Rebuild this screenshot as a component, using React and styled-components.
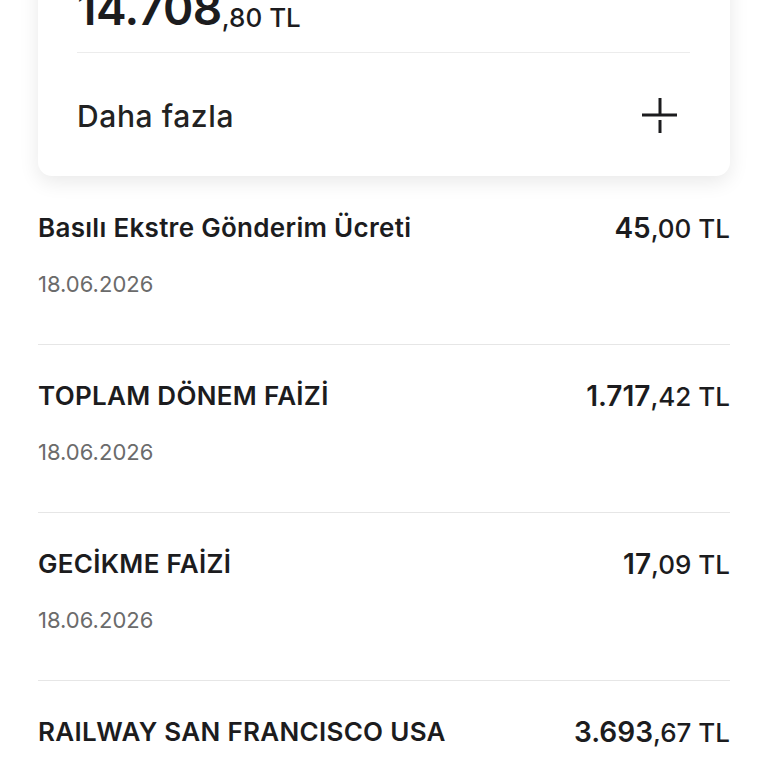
import styled, { createGlobalStyle } from 'styled-components';

const GlobalStyle = createGlobalStyle`
  html, body {
    margin: 0;
    padding: 0;
    background: #ffffff;
  }
  body {
    font-family: Inter, "Noto Sans", "DejaVu Sans", sans-serif;
    color: #1c1c1e;
    overflow: hidden;
  }
`;

const Page = styled.div`
  width: 768px;
  height: 768px;
  overflow: hidden;
  padding: 0 38px;
  box-sizing: border-box;
`;

const Card = styled.div`
  margin-top: -40px;
  background: #fff;
  border-radius: 0 0 14px 14px;
  box-shadow: 0 6px 20px rgba(0, 0, 0, 0.09);
  padding: 0 40px 0 39px;
`;

const Total = styled.div`
  height: 93px;
  box-sizing: border-box;
  display: flex;
  align-items: flex-end;
  padding-bottom: 21px;
  border-bottom: 1.5px solid #ececec;
  font-weight: 600;
  line-height: 1;
`;

const TotalInt = styled.span`
  font-size: 46px;
  letter-spacing: -0.5px;
`;

const TotalDec = styled.span`
  font-size: 26px;
  font-weight: 500;
`;

const MoreRow = styled.div`
  height: 123px;
  display: flex;
  align-items: center;
  justify-content: space-between;
  padding-top: 2px;
  box-sizing: border-box;
`;

const MoreLabel = styled.span`
  font-size: 30px;
  font-weight: 500;
  letter-spacing: 0.6px;
  color: #222;
`;

const PlusIcon = () => (
  <svg width="36" height="36" viewBox="0 0 36 36" style={{ marginRight: 12 }}>
    <g stroke="#1c1c1e" strokeWidth="3" strokeLinecap="butt">
      <line x1="0" y1="17" x2="35" y2="17" />
      <line x1="18" y1="0" x2="18" y2="17" />
      <line x1="18" y1="22" x2="18" y2="35" />
    </g>
  </svg>
);

const List = styled.div`
  display: flex;
  flex-direction: column;
  padding-top: 1px;
`;

const Item = styled.div`
  padding: 34px 0 45px;
  border-bottom: ${(p) => (p.last ? 'none' : '1.5px solid #e6e6e6')};
`;

const TopLine = styled.div`
  display: flex;
  justify-content: space-between;
  align-items: center;
  height: 32px;
`;

const Title = styled.span`
  font-size: 26px;
  font-weight: 600;
  letter-spacing: 0.3px;
  color: #1c1c1e;
  white-space: nowrap;
`;

const Amount = styled.span`
  font-weight: 600;
  color: #1c1c1e;
  white-space: nowrap;
  margin-top: 1px;
`;

const AmountInt = styled.span`
  font-size: 28px;
`;

const AmountDec = styled.span`
  font-size: 26px;
  font-weight: 500;
`;

const DateText = styled.div`
  margin-top: 26px;
  height: 30px;
  line-height: 30px;
  font-size: 22px;
  color: #6b6b6b;
`;

const items = [
  { title: 'Basılı Ekstre Gönderim Ücreti', int: '45', dec: ',00 TL', date: '18.06.2026' },
  { title: 'TOPLAM DÖNEM FAİZİ', int: '1.717', dec: ',42 TL', date: '18.06.2026' },
  { title: 'GECİKME FAİZİ', int: '17', dec: ',09 TL', date: '18.06.2026' },
  { title: 'RAILWAY SAN FRANCISCO USA', int: '3.693', dec: ',67 TL', date: '18.06.2026' },
];

export default function App() {
  return (
    <>
      <GlobalStyle />
      <Page>
        <Card>
          <Total>
            <TotalInt>14.708</TotalInt>
            <TotalDec>,80 TL</TotalDec>
          </Total>
          <MoreRow>
            <MoreLabel>Daha fazla</MoreLabel>
            <PlusIcon />
          </MoreRow>
        </Card>
        <List>
          {items.map((it, i) => (
            <Item key={it.title} last={i === items.length - 1}>
              <TopLine>
                <Title>{it.title}</Title>
                <Amount>
                  <AmountInt>{it.int}</AmountInt>
                  <AmountDec>{it.dec}</AmountDec>
                </Amount>
              </TopLine>
              <DateText>{it.date}</DateText>
            </Item>
          ))}
        </List>
      </Page>
    </>
  );
}
